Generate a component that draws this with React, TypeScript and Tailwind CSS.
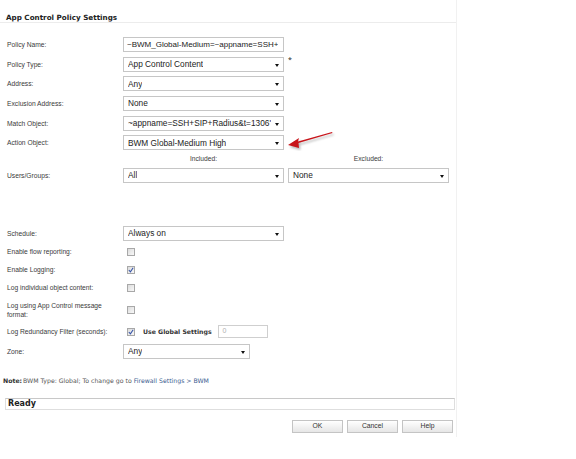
import React from 'react';

const LABEL_FONT = "[font-family:'Liberation_Sans',Arial,sans-serif]";

const Select: React.FC<{ value: string; width?: string; arrow?: boolean }> = ({
  value,
  width = 'w-[161px]',
  arrow = true,
}) => (
  <div
    className={`relative ${width} h-[15px] border border-[#c6c6c6] bg-white flex items-center ${arrow ? 'pl-[4px] pr-[11px] text-[8.3px]' : 'pl-[3px] pr-0 text-[8px]'} overflow-hidden whitespace-nowrap text-[#222] ${LABEL_FONT}`}
  >
    <span className="overflow-hidden">{value}</span>
    {arrow && (
      <span className="absolute right-[4px] top-[6px] w-0 h-0 border-l-[2.5px] border-r-[2.5px] border-t-[3px] border-l-transparent border-r-transparent border-t-[#111]" />
    )}
  </div>
);

const Check: React.FC<{ checked?: boolean }> = ({ checked }) => (
  <div className="w-[8px] h-[8px] border border-[#a8a8a8] bg-gradient-to-br from-[#dcdcdc] to-[#f8f8f8] flex items-center justify-center">
    {checked && (
      <svg width="6" height="6" viewBox="0 0 6 6">
        <path d="M0.8 3 L2.4 4.8 L5.2 0.8" fill="none" stroke="#3654a8" strokeWidth="1.1" />
      </svg>
    )}
  </div>
);

const Row: React.FC<{ label: React.ReactNode; h: string; children?: React.ReactNode }> = ({
  label,
  h,
  children,
}) => (
  <div className={`flex items-center ${h}`}>
    <div className={`w-[123px] pl-[7px] text-[6.7px] leading-[9px] text-[#3a3a3a] ${LABEL_FONT}`}>{label}</div>
    <div className="flex items-center">{children}</div>
  </div>
);

const Button: React.FC<{ children: React.ReactNode }> = ({ children }) => (
  <button
    className={`w-[51px] h-[13px] border border-[#c4c4c4] bg-gradient-to-b from-white to-[#e6e6e6] text-[6.8px] text-[#333] flex items-center justify-center ${LABEL_FONT}`}
  >
    {children}
  </button>
);

export default function App() {
  return (
    <div className="w-[576px] h-[459px] bg-white relative overflow-hidden">
      <div className="w-[457px] h-[437px] border-r border-[#f1f1f1] flex flex-col">
        <div className="h-[23px] pt-[13px] pl-[6px] border-b border-[#ececec] flex items-center">
          <span className="text-[7.2px] font-bold text-[#222] [font-family:'DejaVu_Sans',Verdana,sans-serif] leading-none">
            App Control Policy Settings
          </span>
        </div>

        <div className="h-[12px]" />
        <Row label="Policy Name:" h="h-[19.6px]">
          <Select value="~BWM_Global-Medium=~appname=SSH+" arrow={false} />
        </Row>
        <Row label="Policy Type:" h="h-[19.6px]">
          <div className="relative">
            <Select value="App Control Content" />
            <span className="absolute left-[165px] top-[-2px] text-[7px] text-[#222]">*</span>
          </div>
        </Row>
        <Row label="Address:" h="h-[19.6px]">
          <Select value="Any" />
        </Row>
        <Row label="Exclusion Address:" h="h-[19.6px]">
          <Select value="None" />
        </Row>
        <Row label="Match Object:" h="h-[19.6px]">
          <Select value="~appname=SSH+SIP+Radius&t=1306'" />
        </Row>
        <Row label="Action Object:" h="h-[19.6px]">
          <Select value="BWM Global-Medium High" />
        </Row>

        <div className={`flex h-[13px] items-center pl-[123px] text-[6.7px] text-[#3a3a3a] ${LABEL_FONT}`}>
          <div className="w-[161px] text-center">Included:</div>
          <div className="w-[161px] ml-[4px] text-center">Excluded:</div>
        </div>
        <Row label="Users/Groups:" h="h-[20px]">
          <Select value="All" />
          <div className="ml-[4px]">
            <Select value="None" />
          </div>
        </Row>

        <div className="h-[39px]" />
        <Row label="Schedule:" h="h-[18px]">
          <Select value="Always on" />
        </Row>
        <Row label="Enable flow reporting:" h="h-[18px]">
          <div className="pl-[4px]"><Check /></div>
        </Row>
        <Row label="Enable Logging:" h="h-[18px]">
          <div className="pl-[4px]"><Check checked /></div>
        </Row>
        <Row label="Log individual object content:" h="h-[18px]">
          <div className="pl-[4px]"><Check /></div>
        </Row>
        <Row
          label={
            <>
              Log using App Control message
              <br />
              format:
            </>
          }
          h="h-[26px]"
        >
          <div className="pl-[4px]"><Check /></div>
        </Row>
        <Row label="Log Redundancy Filter (seconds):" h="h-[18px]">
          <div className="pl-[4px]"><Check checked /></div>
          <span className="ml-[8px] text-[6.2px] font-bold text-[#333] [font-family:'DejaVu_Sans',Verdana,sans-serif]">
            Use Global Settings
          </span>
          <div className={`ml-[6px] w-[50px] h-[13px] border border-[#cfcfcf] flex items-center pl-[4px] text-[7px] text-[#b0b0b0] ${LABEL_FONT}`}>
            0
          </div>
        </Row>
        <Row label="Zone:" h="h-[21px]">
          <Select value="Any" width="w-[127px]" />
        </Row>

        <div className="h-[14px]" />
        <div className="h-[10px] pl-[3px] flex items-center text-[6.2px] text-[#555] [font-family:'DejaVu_Sans',Verdana,sans-serif] whitespace-nowrap">
          <span className="font-bold text-[#333]">Note:</span>
          <span className="ml-[1px]">BWM Type: Global; To change go to</span>
          <span className="ml-[2px] text-[#3b5d8f]">Firewall Settings &gt; BWM</span>
        </div>

        <div className="h-[12px]" />
        <div className="ml-[5px] w-[450px] h-[12px] border border-[#dedede] border-t-[#c8c8c8] flex items-center pl-[2px]">
          <span className="text-[8px] font-bold text-[#222] [font-family:'DejaVu_Sans',Verdana,sans-serif] leading-none">Ready</span>
        </div>

        <div className="mt-[10px] flex justify-end gap-[4px] pr-[3px]">
          <Button>OK</Button>
          <Button>Cancel</Button>
          <Button>Help</Button>
        </div>
      </div>

      <svg className="absolute left-[284px] top-[127px]" width="54" height="24" viewBox="0 0 54 24">
        <defs>
          <filter id="sh" x="-20%" y="-50%" width="140%" height="200%">
            <feGaussianBlur stdDeviation="0.8" />
          </filter>
        </defs>
        <g transform="translate(1.5,2)" filter="url(#sh)" fill="#9a9a9a" opacity="0.7">
          <polygon points="4,18 15,11 14,14.5 48,5 48.5,6 14.5,16 15,21" />
        </g>
        <polygon points="4,18 15,11 14,14.5 48,5 48.5,6 14.5,16 15,21" fill="#c8141a" />
      </svg>
    </div>
  );
}
